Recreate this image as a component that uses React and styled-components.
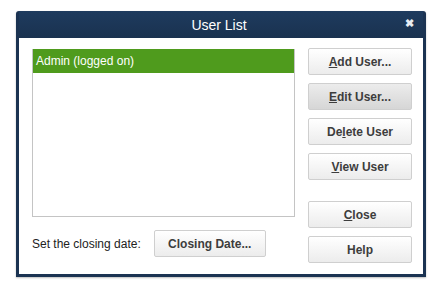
import React from "react";
import styled, { createGlobalStyle } from "styled-components";

const GlobalStyle = createGlobalStyle`
  html, body {
    margin: 0;
    padding: 0;
    background: #ffffff;
    font-family: "Liberation Sans", Arial, sans-serif;
  }
`;

const Page = styled.div`
  width: 437px;
  height: 287px;
  padding: 11px 0 0 16px;
  box-sizing: border-box;
`;

const Window = styled.div`
  width: 410px;
  height: 266px;
  box-sizing: border-box;
  background: #1b3352;
  border-radius: 3px 3px 0 0;
  padding: 0 3px 3px 3px;
  display: flex;
  flex-direction: column;
  box-shadow: 0 1px 2px rgba(0, 0, 0, 0.25);
`;

const TitleBar = styled.div`
  height: 27px;
  position: relative;
  display: flex;
  align-items: center;
  justify-content: center;
  padding-right: 4px;
  color: #ffffff;
  font-size: 14px;
  background: linear-gradient(#1e3b5e, #1a3250);
`;

const CloseX = styled.span`
  position: absolute;
  right: 9px;
  top: 6px;
  font-size: 11px;
  font-weight: bold;
  color: #e8edf3;
`;

const Body = styled.div`
  flex: 1;
  background: #ffffff;
  display: flex;
  gap: 13px;
  padding: 10px 11px 0 13px;
`;

const LeftCol = styled.div`
  width: 263px;
  display: flex;
  flex-direction: column;
`;

const ListBox = styled.div`
  margin-top: 1px;
  height: 168px;
  box-sizing: border-box;
  border: 1px solid #c4c4c4;
  border-top: none;
`;

const ListRow = styled.div`
  height: 24px;
  line-height: 24px;
  padding-left: 3px;
  font-size: 12px;
  color: ${(p) => (p.selected ? "#ffffff" : "#222")};
  background: ${(p) => (p.selected ? "#4f9b1d" : "transparent")};
`;

const Footer = styled.div`
  margin-top: 13px;
  display: flex;
  align-items: center;
  gap: 13px;
  font-size: 12px;
  color: #222;
`;

const RightCol = styled.div`
  width: 104px;
  display: flex;
  flex-direction: column;
  gap: 8px;
`;

const Button = styled.button`
  width: ${(p) => p.width || "104px"};
  height: 27px;
  box-sizing: border-box;
  border: 1px solid #cfcfcf;
  border-radius: 2px;
  background: ${(p) =>
    p.active
      ? "linear-gradient(#ececec, #d6d6d6)"
      : "linear-gradient(#ffffff, #ececec)"};
  font-family: "Liberation Sans", Arial, sans-serif;
  font-size: 12px;
  font-weight: bold;
  color: #3d3d3d;
  padding: 0;
  margin-top: ${(p) => p.spaced || "0"};
  cursor: pointer;

  u {
    text-decoration: underline;
  }
`;

export default function App() {
  return (
    <>
      <GlobalStyle />
      <Page>
        <Window>
          <TitleBar>
            User List
            <CloseX>✖</CloseX>
          </TitleBar>
          <Body>
            <LeftCol>
              <ListBox>
                <ListRow selected>Admin (logged on)</ListRow>
              </ListBox>
              <Footer>
                <span>Set the closing date:</span>
                <Button width="112px">Closing Date...</Button>
              </Footer>
            </LeftCol>
            <RightCol>
              <Button>
                <u>A</u>dd User...
              </Button>
              <Button active>
                <u>E</u>dit User...
              </Button>
              <Button>
                De<u>l</u>ete User
              </Button>
              <Button>
                <u>V</u>iew User
              </Button>
              <Button spaced="13px">
                <u>C</u>lose
              </Button>
              <Button>Help</Button>
            </RightCol>
          </Body>
        </Window>
      </Page>
    </>
  );
}
